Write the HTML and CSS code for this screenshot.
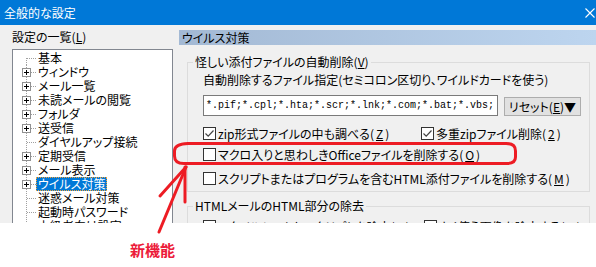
FILE: index.html
```html
<!DOCTYPE html>
<html lang="ja">
<head>
<meta charset="utf-8">
<title>全般的な設定</title>
<link rel="stylesheet" href="styles.css">
</head>
<body>
<div class="window">
  <div class="titlebar">
    <span class="title">全般的な設定</span>
    <svg class="close" width="10" height="10" viewBox="0 0 10 10"><path d="M0.5 0.5 L9.5 9.5 M9.5 0.5 L0.5 9.5" stroke="#fff" stroke-width="1.1" fill="none"/></svg>
  </div>
  <div class="client">
    <div class="left">
      <div class="list-label">設定の一覧(<u>L</u>)</div>
      <ul class="tree">
        <li class="node first"><span class="gutter"></span><span class="label">基本</span></li>
        <li class="node"><span class="gutter"><span class="plus"></span></span><span class="label">ウィンドウ</span></li>
        <li class="node"><span class="gutter"><span class="plus"></span></span><span class="label">メール一覧</span></li>
        <li class="node"><span class="gutter"><span class="plus"></span></span><span class="label">未読メールの閲覧</span></li>
        <li class="node"><span class="gutter"><span class="plus"></span></span><span class="label">フォルダ</span></li>
        <li class="node"><span class="gutter"><span class="plus"></span></span><span class="label">送受信</span></li>
        <li class="node"><span class="gutter"></span><span class="label">ダイヤルアップ接続</span></li>
        <li class="node"><span class="gutter"><span class="plus"></span></span><span class="label">定期受信</span></li>
        <li class="node"><span class="gutter"><span class="plus"></span></span><span class="label">メール表示</span></li>
        <li class="node"><span class="gutter"><span class="plus"></span></span><span class="label selected">ウイルス対策</span></li>
        <li class="node"><span class="gutter"></span><span class="label">迷惑メール対策</span></li>
        <li class="node"><span class="gutter"></span><span class="label">起動時パスワード</span></li>
        <li class="node"><span class="gutter"></span><span class="label">上級者向け設定</span></li>
      </ul>
    </div>
    <div class="right">
      <div class="pane-header">ウイルス対策</div>
      <fieldset class="group g1">
        <legend>怪しい添付ファイルの自動削除(<u>V</u>)</legend>
        <div class="group-body">
          <div class="field-label">自動削除するファイル指定(セミコロン区切り、ワイルドカードを使う)</div>
          <div class="input-row">
            <div class="textbox">*.pif;*.cpl;*.hta;*.scr;*.lnk;*.com;*.bat;*.vbs;</div>
            <button class="btn">リセット(<u>E</u>)▼</button>
          </div>
          <div class="check-row r1 two">
            <label class="check"><span class="box checked"><svg width="11" height="11" viewBox="0 0 11 11"><path d="M1.5 5.5 L4.2 8.2 L9.5 2.5" stroke="#444" stroke-width="1.2" fill="none"/></svg></span>zip形式ファイルの中も調べる(<u>Z</u>)</label>
            <label class="check"><span class="box checked"><svg width="11" height="11" viewBox="0 0 11 11"><path d="M1.5 5.5 L4.2 8.2 L9.5 2.5" stroke="#444" stroke-width="1.2" fill="none"/></svg></span>多重zipファイル削除(<u>2</u>)</label>
          </div>
          <div class="check-row r2">
            <label class="check"><span class="box"></span>マクロ入りと思わしきOfficeファイルを削除する(<u>O</u>)</label>
          </div>
          <div class="check-row r3">
            <label class="check"><span class="box"></span>スクリプトまたはプログラムを含むHTML添付ファイルを削除する(<u>M</u>)</label>
          </div>
        </div>
      </fieldset>
      <fieldset class="group g2">
        <legend>HTMLメールのHTML部分の除去</legend>
        <div class="group-body">
          <div class="check-row r4 two2">
            <label class="check"><span class="box"></span>スタイルシートとスクリプトを除去(<u>S</u>)</label>
            <label class="check"><span class="box"></span>よく使う画像を除去する(<u>G</u>)</label>
          </div>
        </div>
      </fieldset>
    </div>
  </div>
</div>
<div class="note">新機能</div>
<svg class="annot" width="596" height="267" viewBox="0 0 596 267">
  <g stroke="#ed1c24" stroke-width="3" fill="none" stroke-linecap="round" stroke-linejoin="round">
    <path d="M188 143.5 L506 143.5 Q515.5 143.5 515.5 151 L515.5 157 Q515.5 163.5 507 163.5 L184 163.5 Q174.5 163.5 174.5 156 L174.5 151 Q174.5 144 188 143.5 Z"/>
    <path d="M186 167 L160 196"/>
    <path d="M186 167 L159 232"/>
    <path d="M185 167 L185 202"/>
  </g>
</svg>
</body>
</html>
```

FILE: styles.css
```css
* { box-sizing: border-box; }

body {
  margin: 0;
  width: 596px;
  height: 267px;
  background: #fff;
  font-family: "Noto Sans CJK JP", "Noto Sans", sans-serif;
  font-size: 12px;
  font-feature-settings: "palt";
  color: #000;
  overflow: hidden;
  position: relative;
}

u { text-decoration: underline; text-underline-offset: 1px; }

.window {
  height: 223px;
  background: #f0f0f0;
  overflow: hidden;
}

.titlebar {
  height: 25px;
  background: #0078d7;
  color: #fff;
  display: flex;
  align-items: center;
  justify-content: space-between;
  padding: 0 1px 0 4px;
  line-height: 14px;
}

.close { display: block; }

.client { display: flex; }

.left { width: 173px; flex: none; }

.list-label {
  margin: 5px 0 0 12px;
  line-height: 14px;
}

.tree {
  list-style: none;
  margin: 5px 0 0 12px;
  padding: 1px 0 0;
  width: 161px;
  height: 200px;
  border: 1px solid #828790;
  background: #fff;
}

.node {
  display: flex;
  height: 14px;
  line-height: 14px;
  white-space: nowrap;
}

.gutter {
  width: 23px;
  flex: none;
  display: flex;
  align-items: flex-start;
  background-image:
    repeating-linear-gradient(to bottom, #a0a0a0 0 1px, transparent 1px 2px),
    repeating-linear-gradient(to right, #a0a0a0 0 1px, transparent 1px 2px);
  background-size: 1px 100%, 9px 1px;
  background-position: 13px 0, 14px 7px;
  background-repeat: no-repeat;
}

.first .gutter {
  background-size: 1px 7px, 9px 1px;
  background-position: 13px 7px, 14px 7px;
}

.plus {
  width: 9px;
  height: 9px;
  margin: 3px 0 0 9px;
  border: 1px solid #919191;
  background:
    linear-gradient(#000, #000) 1px 3px / 5px 1px no-repeat,
    linear-gradient(#000, #000) 3px 1px / 1px 5px no-repeat,
    #fff;
}

.label { padding: 0 2px; }

.label.selected {
  background: #0078d7;
  color: #fff;
  outline: 1px dotted #f2a33a;
  outline-offset: -1px;
}

.right { flex: 1; min-width: 0; }

.pane-header {
  margin: 5px 0 0 6px;
  height: 15px;
  line-height: 15px;
  padding-left: 3px;
  background: linear-gradient(to right, #a3b9d4, #bdd5ef);
}

.group {
  margin: 10px 6px 0 14px;
  padding: 0 0 5px 5px;
  border: 1px solid #dcdcdc;
  min-width: 0;
}

.group legend {
  padding: 0 2px;
  line-height: 14px;
}

.g2 { margin-top: 7px; }

.group-body { padding-left: 10px; }

.field-label {
  margin-top: 4px;
  line-height: 14px;
  white-space: nowrap;
}

.input-row {
  display: flex;
  align-items: flex-start;
  gap: 6px;
  margin-top: 8px;
}

.textbox {
  width: 295px;
  height: 21px;
  border: 1px solid #7a7a7a;
  background: #fff;
  font-family: "Liberation Mono", monospace;
  font-size: 10px;
  line-height: 19px;
  padding-left: 2px;
  white-space: nowrap;
  overflow: hidden;
}

.btn {
  width: 77px;
  height: 19px;
  margin-top: 2px;
  padding: 0;
  border: 1px solid #adadad;
  background: #e1e1e1;
  font: inherit;
  font-feature-settings: "palt";
  line-height: 17px;
  color: #000;
}

.check-row {
  display: flex;
  align-items: center;
  height: 15px;
  white-space: nowrap;
}

.check-row.two, .check-row.two2 {
  display: grid;
  grid-template-columns: 218px auto;
}
.check-row.two2 { grid-template-columns: 221px auto; }

.r1 { margin-top: 10px; }
.r2 { margin-top: 6px; }
.r3 { margin-top: 9px; }
.r4 { margin-top: 6px; }

.check {
  display: flex;
  align-items: center;
  gap: 2px;
  line-height: 14px;
}

.box {
  width: 13px;
  height: 13px;
  flex: none;
  border: 1px solid #333;
  background: #fff;
  display: flex;
  align-items: center;
  justify-content: center;
}

.box svg { display: block; }

.note {
  margin: 19px 0 0 130px;
  color: #ec1b3a;
  font-weight: bold;
  font-size: 15px;
  line-height: 15px;
}

.annot {
  position: absolute;
  left: 0;
  top: 0;
  pointer-events: none;
}
```
